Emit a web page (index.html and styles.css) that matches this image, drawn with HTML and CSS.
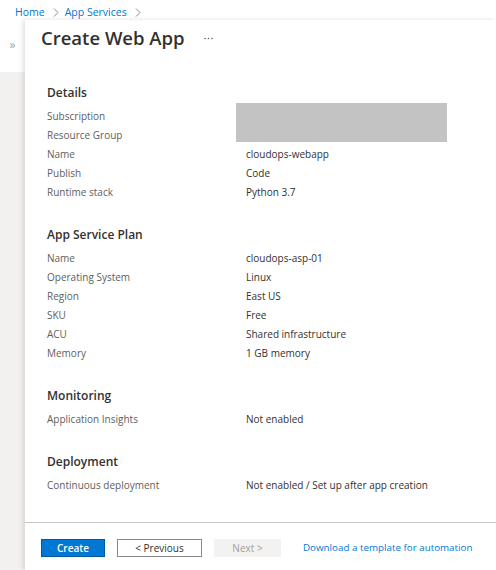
FILE: index.html
```html
<!DOCTYPE html>
<html lang="en">
<head>
  <meta charset="UTF-8" />
  <title>Create Web App</title>
  <link rel="stylesheet" href="styles.css">
</head>
<body>
  <div class="breadcrumb">
    <a href="#">Home</a>
    <svg class="chev" width="6" height="9" viewBox="0 0 6 9"><path d="M1 0.5 L5 4.5 L1 8.5" fill="none" stroke="#8a8886" stroke-width="1"/></svg>
    <a href="#">App Services</a>
    <svg class="chev" width="6" height="9" viewBox="0 0 6 9"><path d="M1 0.5 L5 4.5 L1 8.5" fill="none" stroke="#8a8886" stroke-width="1"/></svg>
  </div>

  <div class="shell">
    <div class="rail">
      <div class="rail-top">&raquo;</div>
    </div>

    <div class="panel">
      <div class="panel-head">
        <h1>Create Web App</h1>
        <svg class="more" width="10" height="3" viewBox="0 0 10 3">
          <circle cx="1" cy="1.5" r="0.8" fill="#605e5c"/>
          <circle cx="4.5" cy="1.5" r="0.8" fill="#605e5c"/>
          <circle cx="8" cy="1.5" r="0.8" fill="#605e5c"/>
        </svg>
      </div>

      <div class="panel-body">
        <div class="section">
          <h3>Details</h3>
          <div class="row"><span class="label">Subscription</span><span class="value"></span></div>
          <div class="row"><span class="label">Resource Group</span><span class="value"></span></div>
          <div class="row"><span class="label">Name</span><span class="value">cloudops-webapp</span></div>
          <div class="row"><span class="label">Publish</span><span class="value">Code</span></div>
          <div class="row"><span class="label">Runtime stack</span><span class="value">Python 3.7</span></div>
          <div class="redact"></div>
        </div>

        <div class="section">
          <h3>App Service Plan</h3>
          <div class="row"><span class="label">Name</span><span class="value">cloudops-asp-01</span></div>
          <div class="row"><span class="label">Operating System</span><span class="value">Linux</span></div>
          <div class="row"><span class="label">Region</span><span class="value">East US</span></div>
          <div class="row"><span class="label">SKU</span><span class="value">Free</span></div>
          <div class="row"><span class="label">ACU</span><span class="value">Shared infrastructure</span></div>
          <div class="row"><span class="label">Memory</span><span class="value">1 GB memory</span></div>
        </div>

        <div class="section">
          <h3>Monitoring</h3>
          <div class="row"><span class="label">Application Insights</span><span class="value">Not enabled</span></div>
        </div>

        <div class="section">
          <h3>Deployment</h3>
          <div class="row"><span class="label">Continuous deployment</span><span class="value">Not enabled / Set up after app creation</span></div>
        </div>
      </div>

      <div class="panel-foot">
        <button class="btn primary">Create</button>
        <button class="btn">&lt; Previous</button>
        <button class="btn disabled">Next &gt;</button>
        <a href="#" class="link">Download a template for automation</a>
      </div>
    </div>
  </div>
</body>
</html>
```

FILE: styles.css
```css
body {
  margin: 0;
  background: #fff;
  font-family: 'Open Sans', 'Noto Sans', sans-serif;
  color: #323130;
  height: 570px;
  overflow: hidden;
}

a {
  color: #0078d4;
  text-decoration: none;
}

.breadcrumb {
  box-sizing: border-box;
  display: flex;
  align-items: center;
  height: 20px;
  padding: 3px 0 0 15px;
  font-size: 10.5px;
}

.breadcrumb .chev {
  margin: 1px 6px 0 8px;
}

.shell {
  display: flex;
  height: 550px;
}

.rail {
  width: 25px;
  flex-shrink: 0;
  background: #f2f1f0;
}

.rail-top {
  height: 52px;
  background: #fff;
  color: #a19f9d;
  font-size: 12px;
  line-height: 50px;
  text-align: center;
}

.panel {
  flex: 1;
  display: flex;
  flex-direction: column;
  background: #fff;
  box-shadow: -2px 0 5px rgba(0, 0, 0, 0.12);
  overflow: hidden;
}

.panel-head {
  flex-shrink: 0;
  display: flex;
  align-items: center;
  height: 35px;
  padding-left: 16px;
}

h1 {
  margin: 0;
  font-size: 18.5px;
  font-weight: 600;
  color: #323130;
}

.more {
  margin: 1px 0 0 19px;
}

.panel-body {
  flex: 1 1 auto;
  min-height: 0;
  padding: 28px 0 0 22px;
}

.section {
  position: relative;
  margin-bottom: 23px;
}

h3 {
  margin: 0 0 4px;
  font-size: 12px;
  line-height: 20px;
  font-weight: 600;
  color: #323130;
}

.row {
  display: flex;
  height: 19px;
  line-height: 19px;
  font-size: 10px;
}

.label {
  width: 199px;
  color: #605e5c;
}

.value {
  color: #323130;
}

.redact {
  position: absolute;
  left: 189px;
  top: 20px;
  width: 211px;
  height: 39px;
  background: #c3c3c3;
}

.panel-foot {
  flex-shrink: 0;
  box-sizing: border-box;
  height: 48px;
  border-top: 1px solid #c8c6c4;
  padding: 16px 0 0 16px;
  display: flex;
  align-items: flex-start;
}

.btn {
  height: 18px;
  padding: 0;
  margin-right: 12px;
  border: 1px solid #8a8886;
  background: #fff;
  color: #323130;
  font-family: inherit;
  font-size: 10px;
  width: 85px;
}

.btn.primary {
  width: 64px;
  background: #0078d4;
  border: 1px solid #005a9e;
  color: #fff;
  font-weight: 600;
}

.btn.disabled {
  width: 67px;
  background: #f3f2f1;
  border-color: #f3f2f1;
  color: #a19f9d;
  margin-right: 22px;
}

.link {
  font-size: 9.8px;
  line-height: 18px;
}
```
